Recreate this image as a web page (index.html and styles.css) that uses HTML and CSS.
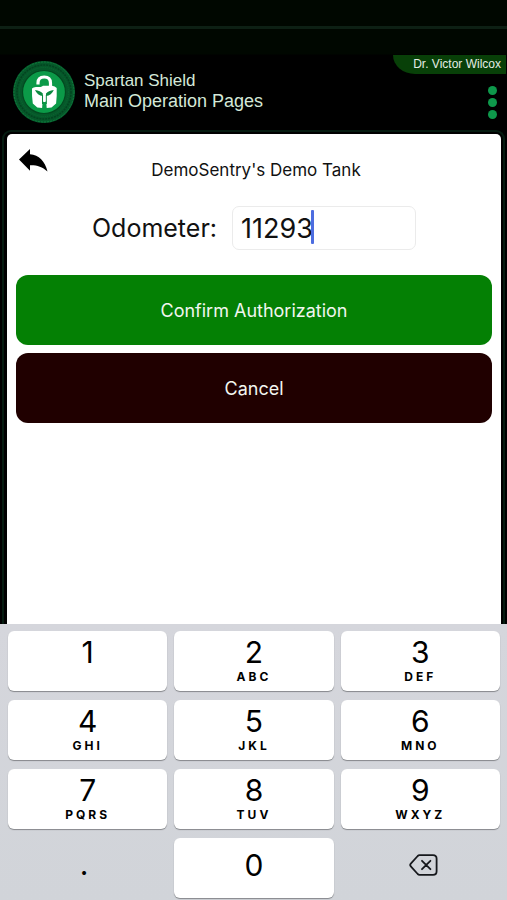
FILE: index.html
```html
<!DOCTYPE html>
<html lang="en">
<head>
<meta charset="utf-8">
<meta name="viewport" content="width=device-width, initial-scale=1">
<title>Spartan Shield</title>
<link rel="stylesheet" href="styles.css">
</head>
<body>
<div class="status-bar"></div>
<header class="header">
  <svg class="logo" viewBox="0 0 62 62" aria-hidden="true">
    <circle cx="31" cy="31" r="31" fill="#06582a"/>
    <circle cx="31" cy="31" r="30" fill="none" stroke="#0e7a3c" stroke-width="1" stroke-dasharray="2 1"/>
    <circle cx="31" cy="31" r="27" fill="none" stroke="#034420" stroke-width="1.500" stroke-dasharray="2 1"/>
    <circle cx="31" cy="31" r="24.500" fill="none" stroke="#0a6a32" stroke-width="1" stroke-dasharray="1 1"/>
    <circle cx="31" cy="31" r="21.500" fill="#0b9a48" stroke="#034a20" stroke-width="1.200"/>
    <path d="M25 23.500V22c0-4 2.500-6 6.200-6s6.300 2 6.300 6v5" fill="none" stroke="#fff" stroke-width="3.200"/>
    <path d="M19 27.500q1.500-1.700 4.500-1.500h4q1.500-.4 2.500-1.200h9q3 .2 4.700 2.200.3 8-.6 15.500L38.500 46.500 33.700 47l-.5-7h-3.600l-.5 7-4.800-.5-4.500-4Q18.700 35 19 27.500z" fill="#fff"/>
    <path d="M22 29q5.500.8 7.800 3.500v2.600q-5.500-.7-7.800-6.100zM40.800 29q-5.500.8-7.800 3.500v2.600q5.500-.7 7.800-6.100z" fill="#0b8a40"/>
    <path d="M29.600 34v9M33.200 34v9" stroke="#0b8a40" stroke-width="1.200"/>
    <path d="M31.400 33v8" stroke="#fff" stroke-width="2.400"/>
  </svg>
  <div class="titles">
    <p class="brand">Spartan Shield</p>
    <h1 class="page-title">Main Operation Pages</h1>
  </div>
  <div class="account">
    <span class="user">Dr. Victor Wilcox</span>
    <button class="menu" type="button" aria-label="Menu"><i class="dot"></i><i class="dot"></i><i class="dot"></i></button>
  </div>
</header>
<main class="frame">
  <form class="panel">
    <div class="heading">
      <button class="back" type="button" aria-label="Back">
        <svg class="back-icon" viewBox="0 0 29 23" aria-hidden="true"><path d="M0 10.500 11 0v5.200C20 6 26 12 28.500 22.500 23 17.500 18 16 11 16.200v5.600z" fill="#000"/></svg>
      </button>
      <h2 class="tank">DemoSentry's Demo Tank</h2>
    </div>
    <div class="field">
      <label class="field-label" for="odometer">Odometer:</label>
      <div class="field-box">
        <input class="field-input" id="odometer" type="text" inputmode="decimal" value="11293">
        <span class="caret"></span>
      </div>
    </div>
    <div class="actions">
      <button class="action confirm" type="button">Confirm Authorization</button>
      <button class="action cancel" type="button">Cancel</button>
    </div>
  </form>
</main>
<div class="keypad">
  <button class="key" type="button">1</button>
  <button class="key" type="button">2<span class="letters">ABC</span></button>
  <button class="key" type="button">3<span class="letters">DEF</span></button>
  <button class="key" type="button">4<span class="letters">GHI</span></button>
  <button class="key" type="button">5<span class="letters">JKL</span></button>
  <button class="key" type="button">6<span class="letters">MNO</span></button>
  <button class="key" type="button">7<span class="letters">PQRS</span></button>
  <button class="key" type="button">8<span class="letters">TUV</span></button>
  <button class="key" type="button">9<span class="letters">WXYZ</span></button>
  <button class="key plain" type="button">.</button>
  <button class="key zero" type="button">0</button>
  <button class="key plain" type="button" aria-label="Delete">
    <svg class="delete-icon" viewBox="0 0 29 22" aria-hidden="true"><path d="M10.500 1.200H24q3.600 0 3.600 3.600v12.400q0 3.600-3.600 3.600H10.500q-1 0-1.800-.8L1.800 12.300q-1.200-1.300 0-2.600L8.700 2q.8-.8 1.800-.8zM13 6.800l8.400 8.400M21.400 6.800 13 15.200" fill="none" stroke="#16181c" stroke-width="1.800" stroke-linecap="round"/></svg>
  </button>
</div>
</body>
</html>
```
FILE: styles.css
```css
* { box-sizing: border-box; }

body {
  margin: 0;
  min-height: 100vh;
  display: flex;
  flex-direction: column;
  background: #000;
  color: #111;
  font-family: Inter, "Liberation Sans", sans-serif;
}

button {
  margin: 0;
  padding: 0;
  border: 0;
  background: none;
  color: inherit;
  font: inherit;
}

h1, h2, p { margin: 0; font-weight: 400; }

.status-bar {
  height: 29px;
  background: #000700;
  border-bottom: 3px solid #0d2014;
}

.header {
  display: flex;
  align-items: flex-start;
  height: 101px;
  background: linear-gradient(#000700 0 25px, #000 26px);
  font-family: "Liberation Sans", sans-serif;
}

.logo {
  width: 62px;
  height: 62px;
  margin: 32px 9px 0 13px;
}

.titles { margin-top: 42px; color: #d4e8d8; }
.brand { font-size: 17px; line-height: 20px; }
.page-title { font-size: 18px; line-height: 20px; }

.account {
  display: flex;
  flex-direction: column;
  align-items: flex-end;
  margin: 26px 1px 0 auto;
}

.user {
  padding: 0 5px 0 20px;
  border-bottom-left-radius: 22px 19px;
  background: #084008;
  color: #e4ede4;
  font-size: 12px;
  line-height: 19px;
}

.menu {
  display: flex;
  flex-direction: column;
  gap: 3px;
  margin: 12px 9px 0 0;
}

.dot {
  width: 9px;
  height: 9px;
  border-radius: 50%;
  background: #0e984b;
}

.frame {
  flex: 1;
  display: flex;
  margin: 0 2px;
  padding: 2px 2px 0 3px;
  border: 2px solid #061c11;
  border-bottom: 0;
  border-radius: 9px 9px 0 0;
}

.panel {
  flex: 1;
  padding: 0 9px;
  border-radius: 5px 5px 0 0;
  background: #fff;
}

.heading {
  display: grid;
  grid-template-columns: 32px 1fr 28px;
  padding-top: 15px;
}

.back { display: flex; margin-left: 3px; }
.back-icon { width: 29px; height: 23px; }

.tank {
  margin-top: 8px;
  font-size: 17px;
  line-height: 26px;
  text-align: center;
}

.field {
  display: flex;
  align-items: center;
  justify-content: center;
  gap: 15px;
  margin-top: 23px;
}

.field-label { font-size: 25px; line-height: 44px; }
.field-box { position: relative; }

.field-input {
  display: block;
  width: 184px;
  height: 44px;
  padding: 0 8px;
  border: 1px solid #ebebeb;
  border-radius: 7px;
  outline: 0;
  background: #fff;
  color: #111;
  font: 27px Inter, "Liberation Sans", sans-serif;
}

.caret {
  position: absolute;
  left: 79px;
  top: 4px;
  width: 3px;
  height: 34px;
  border-radius: 1px;
  background: #4d6de0;
}

.actions {
  display: grid;
  gap: 8px;
  margin-top: 25px;
}

.action {
  height: 70px;
  border-radius: 12px;
  color: #f2f6f0;
  font-size: 18px;
}

.confirm { background: #048004; }
.cancel { background: #200000; }

.keypad {
  display: grid;
  grid-template-columns: repeat(3, 1fr);
  grid-auto-rows: 60px;
  gap: 9px 7px;
  padding: 7px 7px 2px 8px;
  background: linear-gradient(#d5d6dc, #d1d4d9);
}

.key {
  display: flex;
  flex-direction: column;
  align-items: center;
  padding-top: 5px;
  border-radius: 6px;
  background: #fff;
  box-shadow: 0 1px 1px #85878b;
  color: #000;
  font-size: 30px;
  font-weight: 400;
  line-height: 33px;
}

.letters {
  font-size: 12px;
  font-weight: 700;
  line-height: 16px;
  letter-spacing: 3px;
}

.zero { justify-content: center; padding: 0 0 5px; }

.plain {
  justify-content: center;
  padding: 0 7px 7px 0;
  background: none;
  box-shadow: none;
}

.delete-icon { width: 29px; height: 22px; margin-left: 14px; }
```
